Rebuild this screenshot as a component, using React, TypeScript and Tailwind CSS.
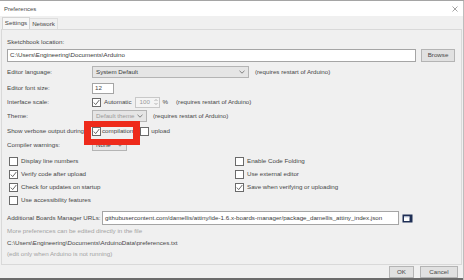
import React from "react";

function Check({ checked }: { checked?: boolean }) {
  return (
    <div className="w-[9px] h-[9px] bg-white border border-[#6a6a6a] flex items-center justify-center shrink-0">
      {checked && (
        <svg width="7" height="7" viewBox="0 0 7 7">
          <polyline points="0.8,3.6 2.7,5.6 6.3,1" fill="none" stroke="#444" strokeWidth="0.8" />
        </svg>
      )}
    </div>
  );
}

function Chevron() {
  return (
    <svg width="6" height="4" viewBox="0 0 6 4">
      <polyline points="0.5,0.8 3,3.2 5.5,0.8" fill="none" stroke="#666" strokeWidth="0.8" />
    </svg>
  );
}

function Select({ w, text, dim }: { w: string; text: string; dim?: boolean }) {
  return (
    <div className={`${w} h-[12px] bg-[#e5e5e5] border border-[#b4b4b4] flex items-center justify-between pl-[3px] pr-[3px]`}>
      <span className={dim ? "text-[#9a9a9a]" : "text-[#3a3a3a]"}>{text}</span>
      <Chevron />
    </div>
  );
}

function Row({ h, mt, label, children }: { h: string; mt?: string; label: string; children?: React.ReactNode }) {
  return (
    <div className={`flex items-center ${h} ${mt ?? ""}`}>
      <div className="w-[85px] shrink-0 whitespace-nowrap overflow-hidden">{label}</div>
      <div className="flex items-center">{children}</div>
    </div>
  );
}

function CheckRow({ checked, label }: { checked?: boolean; label: string }) {
  return (
    <div className="flex items-center h-[13px] gap-[3px]">
      <Check checked={checked} />
      <span className="whitespace-nowrap">{label}</span>
    </div>
  );
}

export default function App() {
  return (
    <div className="relative w-[464px] h-[280px] overflow-hidden bg-[#f0f0f0] text-[6.2px] leading-none text-[#474747] font-['Liberation_Sans',Arial,sans-serif] border-t border-[#a5a5a5]">
      {/* title bar */}
      <div className="h-[15px] bg-white flex items-center justify-between pl-[4px] pr-[6px]">
        <span className="text-[6px] text-[#4a4a4a]">Preferences</span>
        <svg width="6" height="6" viewBox="0 0 6 6">
          <path d="M0.5 0.5 L5.5 5.5 M5.5 0.5 L0.5 5.5" stroke="#666" strokeWidth="0.6" />
        </svg>
      </div>
      {/* tabs */}
      <div className="h-[13px] flex items-end pl-[2px]">
        <div className="h-[12px] w-[28px] bg-[#f7f7f7] border border-b-0 border-[#d4d4d4] flex items-center justify-center">
          Settings
        </div>
        <div className="h-[11px] w-[28px] border-r border-t border-[#dedede] flex items-center justify-center">
          Network
        </div>
      </div>
      {/* panel */}
      <div className="mx-[1px] mr-[2px] h-[236px] border border-[#d9d9d9] pt-[7px] pl-[5px] pr-[6px]">
        <div className="h-[10px] flex items-center">Sketchbook location:</div>
        <div className="mt-[2px] h-[13px] flex items-center">
          <div className="w-[410px] h-[13px] bg-white border border-[#a5a5a5] flex items-center pl-[2px] text-[#3a3a3a]">
            C:\Users\Engineering\Documents\Arduino
          </div>
          <div className="ml-[5px] w-[34px] h-[13px] bg-[#e1e1e1] border border-[#b4b4b4] flex items-center justify-center">
            Browse
          </div>
        </div>
        <Row h="h-[14px]" mt="mt-[3px]" label="Editor language:">
          <Select w="w-[157px]" text="System Default" />
          <span className="ml-[6px]">(requires restart of Arduino)</span>
        </Row>
        <Row h="h-[14px]" mt="mt-[2px]" label="Editor font size:">
          <div className="w-[22px] h-[11px] bg-white border border-[#a5a5a5] flex items-center pl-[2px]">12</div>
        </Row>
        <Row h="h-[14px]" label="Interface scale:">
          <Check checked />
          <span className="ml-[3px]">Automatic</span>
          <div className="ml-[3px] w-[25px] h-[11px] bg-[#f4f4f4] border border-[#c8c8c8] flex items-center justify-between pl-[4px] pr-[1px] text-[#9a9a9a]">
            <span>100</span>
            <svg width="4" height="8" viewBox="0 0 4 8">
              <polyline points="0.5,3 2,1.5 3.5,3" fill="none" stroke="#999" strokeWidth="0.7" />
              <polyline points="0.5,5 2,6.5 3.5,5" fill="none" stroke="#999" strokeWidth="0.7" />
            </svg>
          </div>
          <span className="ml-[3px]">%</span>
          <span className="ml-[8px]">(requires restart of Arduino)</span>
        </Row>
        <Row h="h-[14px]" label="Theme:">
          <Select w="w-[55px]" text="Default theme" dim />
          <span className="ml-[6px]">(requires restart of Arduino)</span>
        </Row>
        <Row h="h-[13px]" mt="mt-[2px]" label="Show verbose output during:">
          <Check checked />
          <span className="ml-[1px]">compilation</span>
          <div className="ml-[7px]">
            <Check />
          </div>
          <span className="ml-[2px]">upload</span>
        </Row>
        <Row h="h-[14px]" label="Compiler warnings:">
          <Select w="w-[35px]" text="None" />
        </Row>
        <div className="mt-[3px] grid grid-cols-[226px_1fr] pl-[2px]">
          <div className="flex flex-col">
            <CheckRow label="Display line numbers" />
            <CheckRow checked label="Verify code after upload" />
            <CheckRow checked label="Check for updates on startup" />
            <CheckRow label="Use accessibility features" />
          </div>
          <div className="flex flex-col">
            <CheckRow label="Enable Code Folding" />
            <CheckRow label="Use external editor" />
            <CheckRow checked label="Save when verifying or uploading" />
          </div>
        </div>
        <div className="mt-[4px] h-[14px] flex items-center">
          <span className="w-[95px] shrink-0 whitespace-nowrap">Additional Boards Manager URLs:</span>
          <div className="w-[297px] h-[14px] bg-white border border-[#a5a5a5] flex items-center pl-[2px] whitespace-nowrap overflow-hidden text-[#3a3a3a]">
            githubusercontent.com/damellis/attiny/ide-1.6.x-boards-manager/package_damellis_attiny_index.json
          </div>
          <div className="ml-[3px] w-[11px] h-[10px] flex items-center justify-center">
            <svg width="11" height="9" viewBox="0 0 11 9">
              <rect x="0.5" y="0.5" width="10" height="8" fill="#1f2f55" />
              <rect x="2" y="2.5" width="5.5" height="4.5" fill="#ffffff" />
              <rect x="2" y="2.5" width="5.5" height="1" fill="#c9d3e6" />
            </svg>
          </div>
        </div>
        <div className="mt-[1px] h-[11px] flex items-center text-[#a3a3a3]">
          More preferences can be edited directly in the file
        </div>
        <div className="h-[12px] flex items-center">C:\Users\Engineering\Documents\ArduinoData\preferences.txt</div>
        <div className="h-[10px] flex items-center text-[#a3a3a3]">(edit only when Arduino is not running)</div>
      </div>
      {/* bottom buttons */}
      <div className="h-[14px] flex items-start justify-end pr-[6px] pt-[1px] gap-[6px]">
        <div className="w-[25px] h-[12px] bg-[#e1e1e1] border border-[#b4b4b4] flex items-center justify-center">OK</div>
        <div className="w-[38px] h-[12px] bg-[#e1e1e1] border border-[#b4b4b4] flex items-center justify-center">Cancel</div>
      </div>
      <div className="absolute left-0 right-0 bottom-0 h-[2px] bg-[#6b6b6b]" />
      <div className="absolute right-0 top-0 bottom-0 w-[1px] bg-[#bdbdbd]" />
      {/* red highlight */}
      <div className="absolute left-[84px] top-[120px] w-[56px] h-[24px] border-x-[7px] border-y-[6px] border-[#ee2a1b]" />
    </div>
  );
}
